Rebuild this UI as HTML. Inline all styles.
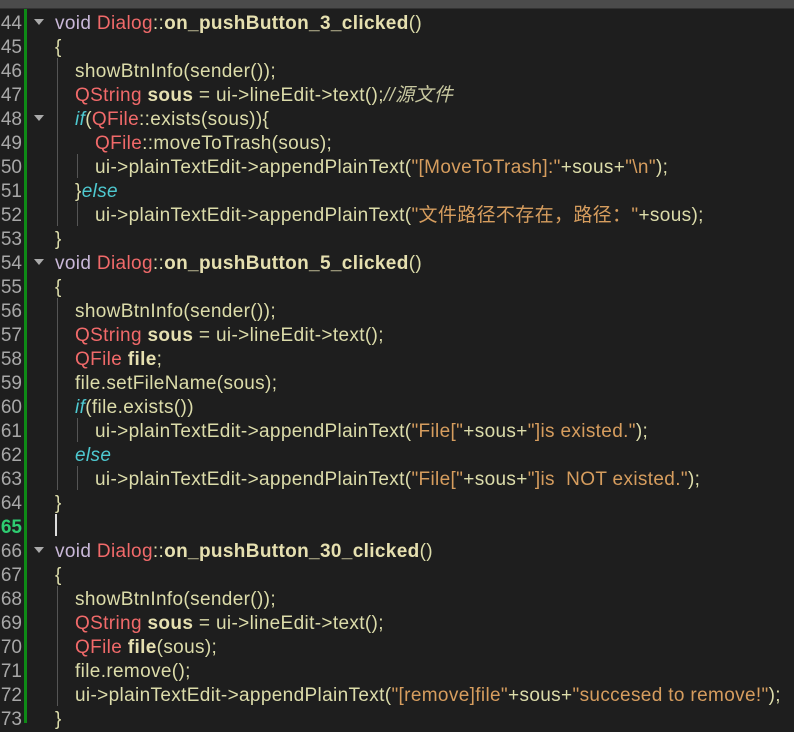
<!DOCTYPE html>
<html><head><meta charset="utf-8"><style>
body{margin:0;width:794px;height:723px;background:#1e1e1e;overflow:hidden;position:relative;font-family:"Liberation Sans","Noto Sans CJK SC",sans-serif;font-size:19px;letter-spacing:0.35px;color:#dcdcaa}
.top{position:absolute;left:0;top:0;width:794px;height:8px;background:#4b4b4b;border-bottom:1px solid #333}
.ln{position:absolute;left:0;width:22px;text-align:right;color:#a8a8a8;font-size:19px;letter-spacing:0;line-height:24px;margin-top:2px}
.l{position:absolute;white-space:pre;height:24px;line-height:24px;margin-top:2px}
.bar{position:absolute;left:24px;top:9px;width:3px;height:714px;background:#0e8a16}
.fold{position:absolute;left:34px;width:0;height:0;border-left:5px solid transparent;border-right:5px solid transparent;border-top:6px solid #aaa}
.g{position:absolute;width:1px;background:#555}
.k{color:#c9b8d8}.t{color:#f16a6a}.b{font-weight:bold;color:#e6e0b0}.s{color:#d69d5e}.i{color:#4ec9d0;font-style:italic}.c{color:#c8c8a0;font-style:italic}
</style></head><body>
<div class="top"></div>
<div class="bar"></div>
<div class="g" style="left:57px;top:58px;height:168px"></div>
<div class="g" style="left:77px;top:154px;height:24px"></div>
<div class="g" style="left:77px;top:202px;height:24px"></div>
<div class="g" style="left:57px;top:298px;height:192px"></div>
<div class="g" style="left:77px;top:418px;height:24px"></div>
<div class="g" style="left:77px;top:466px;height:24px"></div>
<div class="g" style="left:57px;top:586px;height:120px"></div>
<div style="position:absolute;left:55px;top:514px;width:2px;height:22px;background:#ddd"></div>
<div class="fold" style="top:19px"></div>
<div class="fold" style="top:115px"></div>
<div class="fold" style="top:259px"></div>
<div class="fold" style="top:547px"></div>
<div class="ln" style="top:10px">44</div><div class="ln" style="top:34px">45</div><div class="ln" style="top:58px">46</div><div class="ln" style="top:82px">47</div><div class="ln" style="top:106px">48</div><div class="ln" style="top:130px">49</div><div class="ln" style="top:154px">50</div><div class="ln" style="top:178px">51</div><div class="ln" style="top:202px">52</div><div class="ln" style="top:226px">53</div><div class="ln" style="top:250px">54</div><div class="ln" style="top:274px">55</div><div class="ln" style="top:298px">56</div><div class="ln" style="top:322px">57</div><div class="ln" style="top:346px">58</div><div class="ln" style="top:370px">59</div><div class="ln" style="top:394px">60</div><div class="ln" style="top:418px">61</div><div class="ln" style="top:442px">62</div><div class="ln" style="top:466px">63</div><div class="ln" style="top:490px">64</div><div class="ln" style="top:514px;color:#2ecc71;font-weight:bold">65</div><div class="ln" style="top:538px">66</div><div class="ln" style="top:562px">67</div><div class="ln" style="top:586px">68</div><div class="ln" style="top:610px">69</div><div class="ln" style="top:634px">70</div><div class="ln" style="top:658px">71</div><div class="ln" style="top:682px">72</div><div class="ln" style="top:706px">73</div>
<div class="l" style="left:55px;top:10px"><span class="k">void</span> <span class="t">Dialog</span>::<span class="b">on_pushButton_3_clicked</span>()</div>
<div class="l" style="left:55px;top:34px">{</div>
<div class="l" style="left:75px;top:58px">showBtnInfo(sender());</div>
<div class="l" style="left:75px;top:82px"><span class="t">QString</span> <span class="b">sous</span> = ui-&gt;lineEdit-&gt;text();<span class="c">//源文件</span></div>
<div class="l" style="left:75px;top:106px"><span class="i">if</span>(<span class="t">QFile</span>::exists(sous)){</div>
<div class="l" style="left:95px;top:130px"><span class="t">QFile</span>::moveToTrash(sous);</div>
<div class="l" style="left:95px;top:154px">ui-&gt;plainTextEdit-&gt;appendPlainText(<span class="s">"[MoveToTrash]:"</span>+sous+<span class="s">"\n"</span>);</div>
<div class="l" style="left:75px;top:178px">}<span class="i">else</span></div>
<div class="l" style="left:95px;top:202px">ui-&gt;plainTextEdit-&gt;appendPlainText(<span class="s">"文件路径不存在，路径："</span>+sous);</div>
<div class="l" style="left:55px;top:226px">}</div>
<div class="l" style="left:55px;top:250px"><span class="k">void</span> <span class="t">Dialog</span>::<span class="b">on_pushButton_5_clicked</span>()</div>
<div class="l" style="left:55px;top:274px">{</div>
<div class="l" style="left:75px;top:298px">showBtnInfo(sender());</div>
<div class="l" style="left:75px;top:322px"><span class="t">QString</span> <span class="b">sous</span> = ui-&gt;lineEdit-&gt;text();</div>
<div class="l" style="left:75px;top:346px"><span class="t">QFile</span> <span class="b">file</span>;</div>
<div class="l" style="left:75px;top:370px">file.setFileName(sous);</div>
<div class="l" style="left:75px;top:394px"><span class="i">if</span>(file.exists())</div>
<div class="l" style="left:95px;top:418px">ui-&gt;plainTextEdit-&gt;appendPlainText(<span class="s">"File["</span>+sous+<span class="s">"]is existed."</span>);</div>
<div class="l" style="left:75px;top:442px"><span class="i">else</span></div>
<div class="l" style="left:95px;top:466px">ui-&gt;plainTextEdit-&gt;appendPlainText(<span class="s">"File["</span>+sous+<span class="s">"]is  NOT existed."</span>);</div>
<div class="l" style="left:55px;top:490px">}</div>
<div class="l" style="left:55px;top:538px"><span class="k">void</span> <span class="t">Dialog</span>::<span class="b">on_pushButton_30_clicked</span>()</div>
<div class="l" style="left:55px;top:562px">{</div>
<div class="l" style="left:75px;top:586px">showBtnInfo(sender());</div>
<div class="l" style="left:75px;top:610px"><span class="t">QString</span> <span class="b">sous</span> = ui-&gt;lineEdit-&gt;text();</div>
<div class="l" style="left:75px;top:634px"><span class="t">QFile</span> <span class="b">file</span>(sous);</div>
<div class="l" style="left:75px;top:658px">file.remove();</div>
<div class="l" style="left:75px;top:682px">ui-&gt;plainTextEdit-&gt;appendPlainText(<span class="s">"[remove]file"</span>+sous+<span class="s">"succesed to remove!"</span>);</div>
<div class="l" style="left:55px;top:706px">}</div>
</body></html>
